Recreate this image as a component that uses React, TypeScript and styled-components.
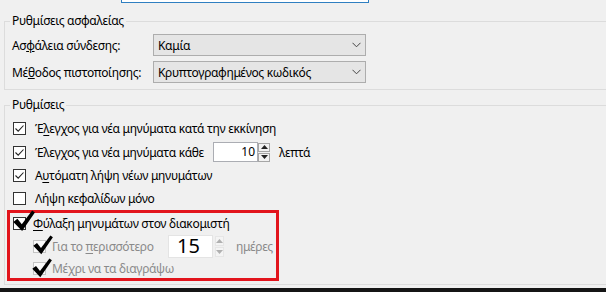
import React from 'react';
import styled, { createGlobalStyle } from 'styled-components';

const GlobalStyle = createGlobalStyle`
  html, body {
    margin: 0;
    padding: 0;
    background: #f0f0f0;
  }
  body {
    font-family: "Noto Sans", "Liberation Sans", sans-serif;
    font-size: 12px;
    letter-spacing: -0.32px;
    color: #000;
  }
`;

const Root = styled.div`
  width: 606px;
  height: 292px;
  overflow: hidden;
  display: flex;
  flex-direction: column;
  background: #f0f0f0;
`;

const TopField = styled.div`
  flex: none;
  margin-left: 121px;
  width: 248px;
  height: 3px;
  box-sizing: border-box;
  background: #fff;
  border: 1px solid #2f7fc1;
  border-top: none;
`;

const Group = styled.fieldset<{ $mt: number; $pad: string }>`
  flex: none;
  margin: ${(p) => p.$mt}px 0 0 4px;
  padding: ${(p) => p.$pad};
  width: 640px;
  min-width: 0;
  box-sizing: border-box;
  border: 1px solid #dcdcdc;
  border-right: none;
`;

const Legend = styled.legend`
  margin-left: 5px;
  padding: 0 2px;
  line-height: 16px;
`;

const FormGrid = styled.div`
  display: grid;
  grid-template-columns: 141px 213px;
  row-gap: 5px;
  padding-left: 7px;
  align-items: center;
`;

const Select = styled.div`
  height: 22px;
  box-sizing: border-box;
  background: #e5e5e5;
  border: 1px solid #adadad;
  display: flex;
  align-items: center;
  justify-content: space-between;
  padding: 0 4px 0 4px;
`;

const Row = styled.div<{ $h: number; $indent: number }>`
  display: flex;
  align-items: center;
  height: ${(p) => p.$h}px;
  padding-left: ${(p) => p.$indent}px;
  white-space: nowrap;
`;

const Check = styled.label<{ $w?: number; $gap: number; $dim?: boolean }>`
  flex: none;
  display: flex;
  align-items: center;
  gap: ${(p) => p.$gap}px;
  width: ${(p) => (p.$w ? `${p.$w}px` : 'auto')};
  color: ${(p) => (p.$dim ? '#8a8a8a' : '#000')};

  u {
    text-underline-offset: 2px;
  }
`;

const Box = styled.span<{ $disabled?: boolean }>`
  position: relative;
  flex: none;
  width: 13px;
  height: 13px;
  box-sizing: border-box;
  border: 1px solid ${(p) => (p.$disabled ? '#c4c4c4' : '#333')};
  background: ${(p) => (p.$disabled ? '#fafafa' : '#fff')};
  display: flex;
  align-items: center;
  justify-content: center;
`;

const Mark = styled.svg<{ $x: number; $y: number; $s: number }>`
  position: absolute;
  left: ${(p) => p.$x}px;
  top: ${(p) => p.$y}px;
  width: ${(p) => p.$s}px;
  height: ${(p) => p.$s}px;
`;

const Highlight = styled.div`
  margin-left: 2px;
  width: 272px;
  box-sizing: border-box;
  border: 3px solid #e2141c;
`;

const SpinField = styled.div<{ $disabled?: boolean }>`
  flex: none;
  width: 45px;
  height: ${(p) => (p.$disabled ? 23 : 20)}px;
  box-sizing: border-box;
  background: #fff;
  border: 1px solid ${(p) => (p.$disabled ? '#e4e4e4' : '#abadb3')};
  display: flex;
  align-items: center;
  justify-content: flex-end;
  padding-right: ${(p) => (p.$disabled ? 12 : 2)}px;
  font-size: ${(p) => (p.$disabled ? 20 : 12)}px;
  letter-spacing: 0;
  line-height: 1;
`;

const SpinButtons = styled.div<{ $disabled?: boolean }>`
  flex: none;
  display: flex;
  flex-direction: column;
  gap: 1px;
  margin-left: ${(p) => (p.$disabled ? 2 : 0)}px;
  width: ${(p) => (p.$disabled ? 9 : 12)}px;
  height: ${(p) => (p.$disabled ? 21 : 19)}px;
`;

const SpinButton = styled.div<{ $disabled?: boolean }>`
  flex: 1;
  box-sizing: border-box;
  border: 1px solid ${(p) => (p.$disabled ? '#e6e6e6' : '#a6a6a6')};
  background: ${(p) => (p.$disabled ? '#f4f4f4' : '#f2f2f2')};
  display: flex;
  align-items: center;
  justify-content: center;
`;

const Unit = styled.span<{ $ml: number; $dim?: boolean }>`
  margin-left: ${(p) => p.$ml}px;
  color: ${(p) => (p.$dim ? '#8a8a8a' : '#000')};
`;

const BottomEdge = styled.div`
  flex: none;
  margin-top: auto;
  height: 4px;
  background: #151515;
`;

const Chevron = () => (
  <svg width="9" height="6" viewBox="0 0 9 6">
    <polyline points="0.5,0.8 4.5,4.8 8.5,0.8" fill="none" stroke="#444" strokeWidth="1" />
  </svg>
);

const Tick = () => (
  <svg width="11" height="11" viewBox="0 0 11 11">
    <polyline points="1.5,5.5 4.2,8.2 9.5,2.5" fill="none" stroke="#222" strokeWidth="1.1" />
  </svg>
);

const BigMark = ({ x, y, s }: { x: number; y: number; s: number }) => (
  <Mark $x={x} $y={y} $s={s} viewBox="0 0 20 20">
    <polygon points="0.3,10.8 4,8 8,13 17.4,0.4 19.9,2.3 8.3,19.2" fill="#000" />
  </Mark>
);

const Triangle = ({ up, color }: { up?: boolean; color: string }) => (
  <svg width="7" height="4" viewBox="0 0 7 4">
    <polygon points={up ? '0,4 3.5,0 7,4' : '0,0 3.5,4 7,0'} fill={color} />
  </svg>
);

interface CheckItemProps {
  checked?: boolean;
  disabled?: boolean;
  mark?: { x: number; y: number; s: number };
  gap: number;
  width?: number;
  children: React.ReactNode;
}

const CheckItem = ({ checked, disabled, mark, gap, width, children }: CheckItemProps) => (
  <Check $gap={gap} $w={width} $dim={disabled}>
    <Box $disabled={disabled}>
      {checked && !mark && <Tick />}
      {mark && <BigMark {...mark} />}
    </Box>
    <span>{children}</span>
  </Check>
);

const Spin = ({ value, disabled }: { value: string; disabled?: boolean }) => (
  <>
    <SpinField $disabled={disabled}>{value}</SpinField>
    <SpinButtons $disabled={disabled}>
      <SpinButton $disabled={disabled}>
        <Triangle up color={disabled ? '#b0b0b0' : '#222'} />
      </SpinButton>
      <SpinButton $disabled={disabled}>
        <Triangle color={disabled ? '#b0b0b0' : '#222'} />
      </SpinButton>
    </SpinButtons>
  </>
);

export default function App() {
  return (
    <Root>
      <GlobalStyle />
      <TopField />

      <Group $mt={10} $pad="5px 0 6px 0">
        <Legend>Ρυθμίσεις ασφαλείας</Legend>
        <FormGrid>
          <span>
            Ασ<u>φ</u>άλεια σύνδεσης:
          </span>
          <Select>
            <span>Καμία</span>
            <Chevron />
          </Select>
          <span>
            Μέ<u>θ</u>οδος πιστοποίησης:
          </span>
          <Select>
            <span>Κρυπτογραφημένος κωδικός</span>
            <Chevron />
          </Select>
        </FormGrid>
      </Group>

      <Group $mt={7} $pad="4px 0 3px 0">
        <Legend>Ρυθμίσεις</Legend>
        <Row $h={23} $indent={8}>
          <CheckItem checked gap={9}>
            Έ<u>λ</u>εγχος για νέα μηνύματα κατά την εκκίνηση
          </CheckItem>
        </Row>
        <Row $h={24} $indent={8}>
          <CheckItem checked gap={9} width={200}>
            Έλεγ<u>χ</u>ος για νέα μηνύματα κάθε
          </CheckItem>
          <Spin value="10" />
          <Unit $ml={9}>λεπτά</Unit>
        </Row>
        <Row $h={23} $indent={8}>
          <CheckItem checked gap={9}>
            Α<u>υ</u>τόματη λήψη νέων μηνυμάτων
          </CheckItem>
        </Row>
        <Row $h={23} $indent={8}>
          <CheckItem gap={9}>Λήψη κεφαλίδων μόνο</CheckItem>
        </Row>

        <Highlight>
          <Row $h={21} $indent={3}>
            <CheckItem checked gap={7} mark={{ x: -1, y: -8, s: 22 }}>
              <u>Φ</u>ύλαξη μηνυμάτων στον διακομιστή
            </CheckItem>
          </Row>
          <Row $h={24} $indent={23}>
            <CheckItem checked disabled gap={6} width={135} mark={{ x: -1, y: -6, s: 20 }}>
              Για το <u>π</u>ερισσότερο
            </CheckItem>
            <Spin value="15" disabled />
            <Unit $ml={12} $dim>
              ημέρες
            </Unit>
          </Row>
          <Row $h={20} $indent={23}>
            <CheckItem checked disabled gap={6} mark={{ x: -2, y: -5, s: 20 }}>
              Μέχρι να τα διαγράψω
            </CheckItem>
          </Row>
        </Highlight>
      </Group>

      <BottomEdge />
    </Root>
  );
}
